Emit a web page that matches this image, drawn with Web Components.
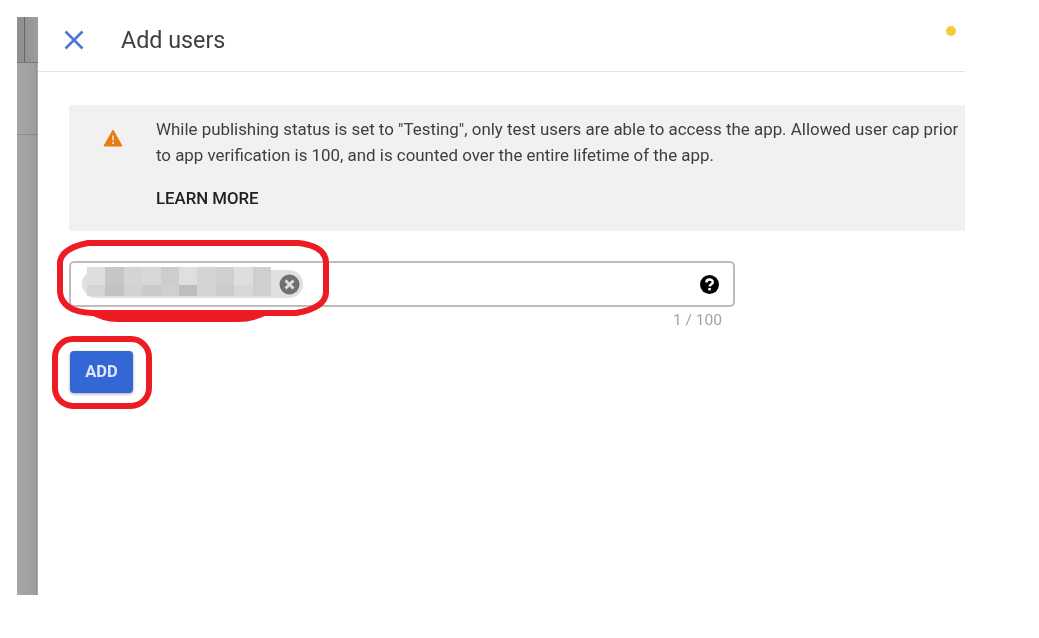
<!DOCTYPE html>
<html>
<head>
<meta charset="utf-8">
<title>Add users</title>
<style>
    html, body { margin: 0; background: #fff; }
    body { width: 1039px; height: 638px; overflow: hidden; font-family: Roboto, "Liberation Sans", sans-serif; }
</style>
</head>
<body>
<app-stage>
    <panel-header slot="header" title-text="Add users"></panel-header>
    <notice-box>
        While publishing status is set to "Testing", only test users are able to access the app. Allowed user cap prior<br>
        to app verification is 100, and is counted over the entire lifetime of the app.
    </notice-box>
    <chip-input count="1 / 100"></chip-input>
    <add-button>ADD</add-button>
</app-stage>
<script>
function shadow(el, html) {
    const template = document.createElement('template')
    template.innerHTML = html
    el.attachShadow({ mode: 'open' }).appendChild(template.content.cloneNode(true))
}

class AppStage extends HTMLElement {
    constructor() {
        super()
        shadow(this, `
            <style>
            :host { display: flex; position: relative; width: 948px; height: 578px; margin: 17px 0 0 17px; }
            .strip {
                position: relative;
                width: 21px;
                filter: blur(0.5px);
                background: linear-gradient(90deg, #a6a6a6, #9f9f9f 85%, #8f8f8f 95%, #c8c8c8);
            }
            .strip .top { height: 45px; border-bottom: 1px solid #777; background: linear-gradient(90deg, #8d8d8d, #9d9d9d); }
            .strip .top::before { content: ""; display: block; width: 1px; height: 45px; margin-left: 7px; background: #666; }
            .strip .mid { height: 71px; border-bottom: 1px solid #8a8a8a; }
            .panel { flex: 1; display: flex; flex-direction: column; filter: blur(0.7px); }
            .body { display: flex; flex-direction: column; align-items: flex-start; padding: 33px 0 0 31px; }
            .ring { position: absolute; left: -17px; top: -17px; pointer-events: none; }
            </style>
            <div class="strip"><div class="top"></div><div class="mid"></div></div>
            <div class="panel">
                <slot name="header"></slot>
                <div class="body"><slot></slot></div>
            </div>
            <svg class="ring" width="400" height="450" viewBox="0 0 400 450" fill="none" stroke="#ed1c24" stroke-width="6" stroke-linejoin="round">
                <path d="M88 243 H298 Q325 246 326 262 V293 Q325 308 296 313 H92 Q62 312 60 292 V262 Q62 248 88 243 Z"/>
                <path d="M88 313 Q102 322 118 322 H238 Q256 322 270 313 Z" fill="#ed1c24" stroke="none"/>
                <rect x="55" y="339" width="94" height="67" rx="18"/>
            </svg>
        `)
    }
}

class PanelHeader extends HTMLElement {
    constructor() {
        super()
        shadow(this, `
            <style>
            :host { display: flex; align-items: center; box-sizing: border-box; height: 55px; padding-bottom: 9px; border-bottom: 1px solid #e4e4e4; position: relative; }
            svg { margin-left: 26px; width: 20px; height: 20px; }
            .title { margin-left: 37px; font-size: 23.3px; color: #3c4043; }
            .dot { position: absolute; left: 908px; top: 9px; width: 10px; height: 10px; border-radius: 50%; background: #f7c93e; }
            </style>
            <svg viewBox="0 0 20 20" fill="none" stroke="#4a76d4" stroke-width="2.6"><path d="M1.5 1.5 L18.5 18.5 M18.5 1.5 L1.5 18.5"/></svg>
            <span class="title"></span>
            <span class="dot"></span>
        `)
        this.shadowRoot.querySelector('.title').textContent = this.getAttribute('title-text')
    }
}

class NoticeBox extends HTMLElement {
    constructor() {
        super()
        shadow(this, `
            <style>
            :host { display: flex; box-sizing: border-box; width: 896px; height: 126px; background: #f1f1f1; border-radius: 3px 0 0 3px; padding: 11px 0 0 34px; }
            svg { width: 20px; height: 18px; margin-top: 13px; flex: none; }
            .text { margin-left: 33px; font-size: 16.9px; line-height: 26px; color: #3c3f42; white-space: nowrap; }
            .more { margin-top: 17px; font-size: 16.8px; font-weight: 500; color: #202124; line-height: 26px; }
            </style>
            <svg viewBox="0 0 20 18"><path d="M10 1 L19 17 H1 Z" fill="#e67c13" stroke="#e67c13" stroke-width="1" stroke-linejoin="round"/><path d="M9 6.5 H11 V11.5 H9 Z M9 13 H11 V15 H9 Z" fill="#f6d3ad"/></svg>
            <div class="text"><slot></slot><div class="more">LEARN MORE</div></div>
        `)
    }
}

class ChipInput extends HTMLElement {
    constructor() {
        super()
        const cells = ['#dedede','#c6c6c6','#d4d4d4','#d8d8d8','#cdcdcd','#dfdfdf','#d4d4d4','#cfcfcf','#dedede','#cfcfcf',
                       '#d5d5d5','#c2c2c2','#d2d2d2','#cacaca','#cfcfcf','#bdbdbd','#d4d4d4','#cbcbcb','#d8d8d8','#cfcfcf']
        shadow(this, `
            <style>
            :host { display: block; width: 666px; margin-top: 30px; }
            .field {
                position: relative; box-sizing: border-box; height: 46px; display: flex; align-items: center;
                border: 2px solid #bdbdbd; border-radius: 5px; background: #fff;
            }
            .chip { display: flex; align-items: center; justify-content: flex-end; box-sizing: border-box; width: 221px; height: 28px; margin-left: 11px; padding-right: 3px; border-radius: 14px; background: #e0e0e0; }
            .x { width: 21px; height: 21px; }
            .cells { position: absolute; left: 16px; top: 4px; width: 184px; height: 29px; display: grid; grid-template-columns: repeat(10, 1fr); grid-template-rows: 18px 11px; }
            .help { margin-left: auto; margin-right: 14px; width: 19px; height: 19px; }
            .count { margin: 4px 13px 0 0; text-align: right; font-size: 15.5px; color: #a3a3a3; }
            </style>
            <div class="field">
                <div class="chip">
                    <svg class="x" viewBox="0 0 21 21"><circle cx="10.5" cy="10.5" r="10" fill="#707070"/><path d="M6.5 6.5 L14.5 14.5 M14.5 6.5 L6.5 14.5" stroke="#e0e0e0" stroke-width="2.8"/></svg>
                </div>
                <div class="cells"></div>
                <svg class="help" viewBox="0 0 19 19"><circle cx="9.5" cy="9.5" r="9.5" fill="#000"/><path d="M6.4 7.4 C6.4 3.6 12.8 3.6 12.8 7.2 C12.8 9.2 9.6 9.2 9.6 11.6" fill="none" stroke="#fff" stroke-width="2.4"/><rect x="8.3" y="13" width="2.6" height="2.4" fill="#fff"/></svg>
            </div>
            <div class="count"></div>
        `)
        const grid = this.shadowRoot.querySelector('.cells')
        cells.forEach(c => {
            const cell = document.createElement('div')
            cell.style.background = c
            grid.appendChild(cell)
        })
        this.shadowRoot.querySelector('.count').textContent = this.getAttribute('count')
    }
}

class AddButton extends HTMLElement {
    constructor() {
        super()
        shadow(this, `
            <style>
            :host {
                display: flex; align-items: center; justify-content: center; box-sizing: border-box;
                width: 63px; height: 42px; margin: 22px 0 0 1px; padding-bottom: 2px; border-radius: 4px; background: #3367d6;
                box-shadow: 0 1px 3px rgba(0,0,0,.35); color: #dfe8fa; font-size: 16.5px; font-weight: 700;
            }
            </style>
            <slot></slot>
        `)
    }
}

customElements.define('app-stage', AppStage)
customElements.define('panel-header', PanelHeader)
customElements.define('notice-box', NoticeBox)
customElements.define('chip-input', ChipInput)
customElements.define('add-button', AddButton)
</script>
</body>
</html>
